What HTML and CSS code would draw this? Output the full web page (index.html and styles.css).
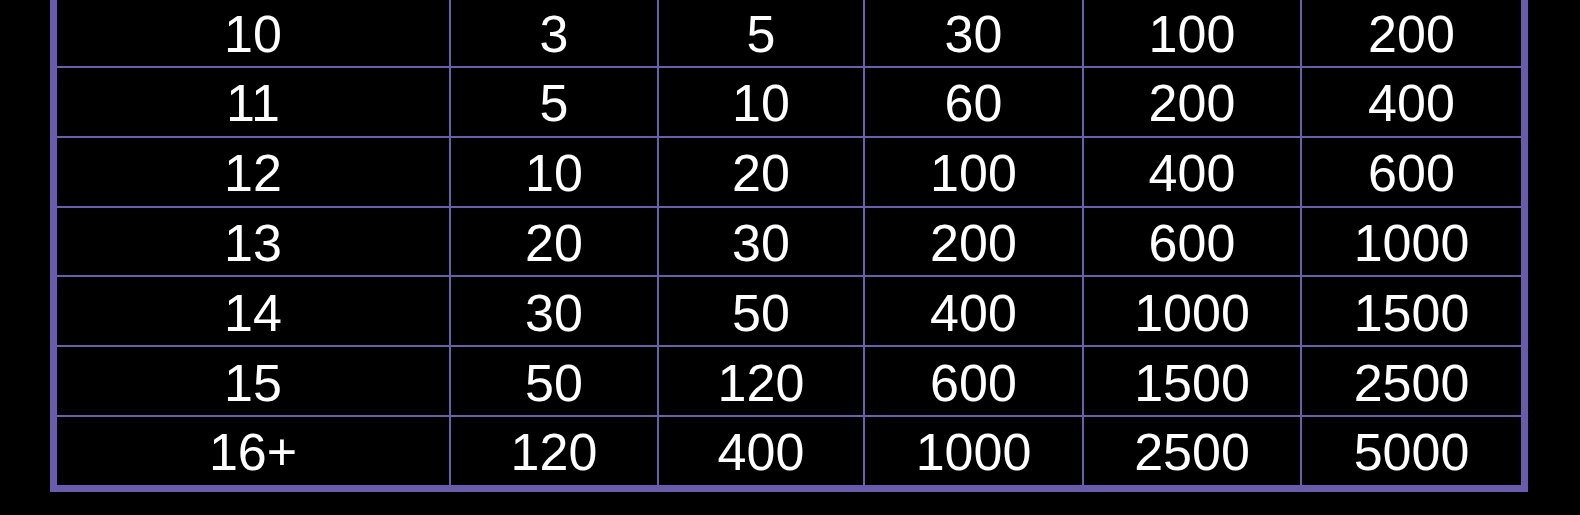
FILE: index.html
```html
<!DOCTYPE html>
<html>
<head>
<meta charset="utf-8">
<link rel="stylesheet" href="styles.css">
</head>
<body>
<div class="page">
<table class="pay">
<colgroup>
<col class="c1"><col class="c2"><col class="c3"><col class="c4"><col class="c5"><col class="c6">
</colgroup>
<tbody>
<tr><td>10</td><td>3</td><td>5</td><td>30</td><td>100</td><td>200</td></tr>
<tr><td>11</td><td>5</td><td>10</td><td>60</td><td>200</td><td>400</td></tr>
<tr><td>12</td><td>10</td><td>20</td><td>100</td><td>400</td><td>600</td></tr>
<tr><td>13</td><td>20</td><td>30</td><td>200</td><td>600</td><td>1000</td></tr>
<tr><td>14</td><td>30</td><td>50</td><td>400</td><td>1000</td><td>1500</td></tr>
<tr><td>15</td><td>50</td><td>120</td><td>600</td><td>1500</td><td>2500</td></tr>
<tr><td>16+</td><td>120</td><td>400</td><td>1000</td><td>2500</td><td>5000</td></tr>
</tbody>
</table>
</div>
</body>
</html>
```
FILE: styles.css
```css
html, body {
  margin: 0;
  padding: 0;
  background: #000;
}
.page {
  width: 1580px;
  height: 515px;
  overflow: hidden;
  padding-left: 50px;
  box-sizing: border-box;
}
.pay {
  margin-top: -8.8px;
  border-collapse: separate;
  border-spacing: 0;
  border: 7px solid #6a5cad;
  table-layout: fixed;
  width: 1478px;
  font-family: "Liberation Sans", Arial, sans-serif;
  font-size: 52px;
  color: #fff;
}
.c1 { width: 394px; }
.c2 { width: 208px; }
.c3 { width: 206px; }
.c4 { width: 219px; }
.c5 { width: 218px; }
.c6 { width: 219px; }
.pay td {
  box-sizing: border-box;
  height: 69.8px;
  padding: 3px 0 0;
  text-align: center;
  vertical-align: middle;
  line-height: 1;
  border-right: 2px solid #6a60aa;
  border-bottom: 2px solid #6a60aa;
}
.pay td:last-child {
  border-right: none;
}
.pay tr:last-child td {
  border-bottom: none;
  height: 67.8px;
}
```
